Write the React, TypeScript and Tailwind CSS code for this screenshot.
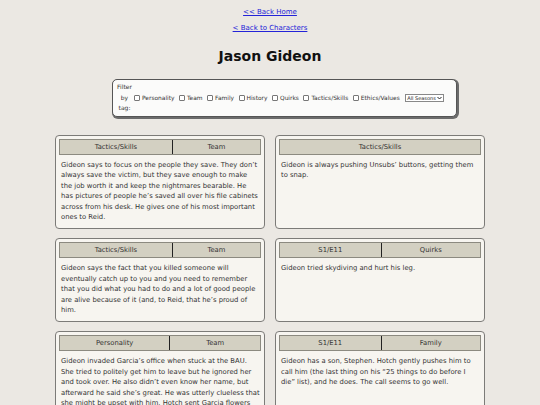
import React from 'react';

// --- Data ---

type Entry = { tags: string[]; text: string };

const entries: Entry[] = [
    {
        tags: ['Tactics/Skills', 'Team'],
        text: "Gideon says to focus on the people they save. They don’t always save the victim, but they save enough to make the job worth it and keep the nightmares bearable. He has pictures of people he’s saved all over his file cabinets across from his desk. He gives one of his most important ones to Reid.",
    },
    {
        tags: ['Tactics/Skills'],
        text: "Gideon is always pushing Unsubs’ buttons, getting them to snap.",
    },
    {
        tags: ['Tactics/Skills', 'Team'],
        text: "Gideon says the fact that you killed someone will eventually catch up to you and you need to remember that you did what you had to do and a lot of good people are alive because of it (and, to Reid, that he’s proud of him.",
    },
    {
        tags: ['S1/E11', 'Quirks'],
        text: "Gideon tried skydiving and hurt his leg.",
    },
    {
        tags: ['Personality', 'Team'],
        text: "Gideon invaded Garcia’s office when stuck at the BAU. She tried to politely get him to leave but he ignored her and took over. He also didn’t even know her name, but afterward he said she’s great. He was utterly clueless that she might be upset with him. Hotch sent Garcia flowers on his behalf.",
    },
    {
        tags: ['S1/E11', 'Family'],
        text: "Gideon has a son, Stephen. Hotch gently pushes him to call him (the last thing on his “25 things to do before I die” list), and he does. The call seems to go well.",
    },
];

const filterTags = ['Personality', 'Team', 'Family', 'History', 'Quirks', 'Tactics/Skills', 'Ethics/Values'];

// --- Pieces ---

const TagBar = ({ tags }: { tags: string[] }) => (
    <div className="flex border border-[#8c8a80] bg-[#d3d0c2]">
        {tags.map((t, i) => (
            <div
                key={t}
                className={`flex-auto text-center text-[6.8px] leading-[14px] text-[#333] ${i > 0 ? 'border-l border-[#222]' : ''}`}
            >
                {t}
            </div>
        ))}
    </div>
);

const Card = ({ entry }: { entry: Entry }) => (
    <div className="rounded-[4px] border border-[#7c7b78] bg-[#f7f5f0] px-[3px] pt-[3px] pb-[6px]">
        <TagBar tags={entry.tags} />
        <p className="mt-[5px] pl-[2px] pr-[0.5px] text-[6.8px] leading-[10.4px] text-[#333]">{entry.text}</p>
    </div>
);

export default function App() {
    return (
        <div
            className="min-h-[405px] bg-[#ebe8e3] pt-[7px] pb-[20px] antialiased"
            style={{ fontFamily: '"DejaVu Sans", Verdana, sans-serif' }}
        >
            {/* Nav links */}
            <div className="text-center text-[7px] leading-[10px]">
                <a href="#" className="text-[#2323d8] underline">&lt;&lt; Back Home</a>
            </div>
            <div className="mt-[6px] text-center text-[7px] leading-[10px]">
                <a href="#" className="text-[#2323d8] underline">&lt; Back to Characters</a>
            </div>

            <h1 className="mt-[15px] text-center text-[14px] font-bold leading-[16px] text-[#111]">Jason Gideon</h1>

            {/* Filter */}
            <div className="ml-[112px] mt-[15px] flex h-[38px] w-[345px] items-center rounded-[5px] border border-[#555] bg-[#fbfbfa] pl-[3px] shadow-[1px_1px_0_1px_#6b6b6b]">
                <div className="w-[17px] text-center text-[6px] leading-[10.5px] text-[#333]">
                    Filter by tag:
                </div>
                <div className="ml-[1px] flex items-center whitespace-nowrap text-[5.9px] text-[#333]">
                    {filterTags.map(t => (
                        <label key={t} className="mr-[4.5px] flex items-center">
                            <span className="mr-[2px] inline-block h-[6px] w-[6px] rounded-[1px] border border-[#777] bg-white" />
                            {t}
                        </label>
                    ))}
                    <div className="ml-[1px] flex h-[8px] items-center border border-[#888] bg-white pl-[1px] text-[5px] leading-[6px] text-[#222]">
                        All Seasons
                        <svg width="5" height="4" viewBox="0 0 10 8" className="ml-[1px] mr-[1px]">
                            <path d="M1 2L5 6L9 2" stroke="#222" strokeWidth="2" fill="none" />
                        </svg>
                    </div>
                </div>
            </div>

            {/* Entries */}
            <div className="mx-auto mt-[18px] grid w-[430px] grid-cols-2 gap-x-[10px] gap-y-[9px]">
                {entries.map((e, i) => (
                    <Card key={i} entry={e} />
                ))}
            </div>
        </div>
    );
}
